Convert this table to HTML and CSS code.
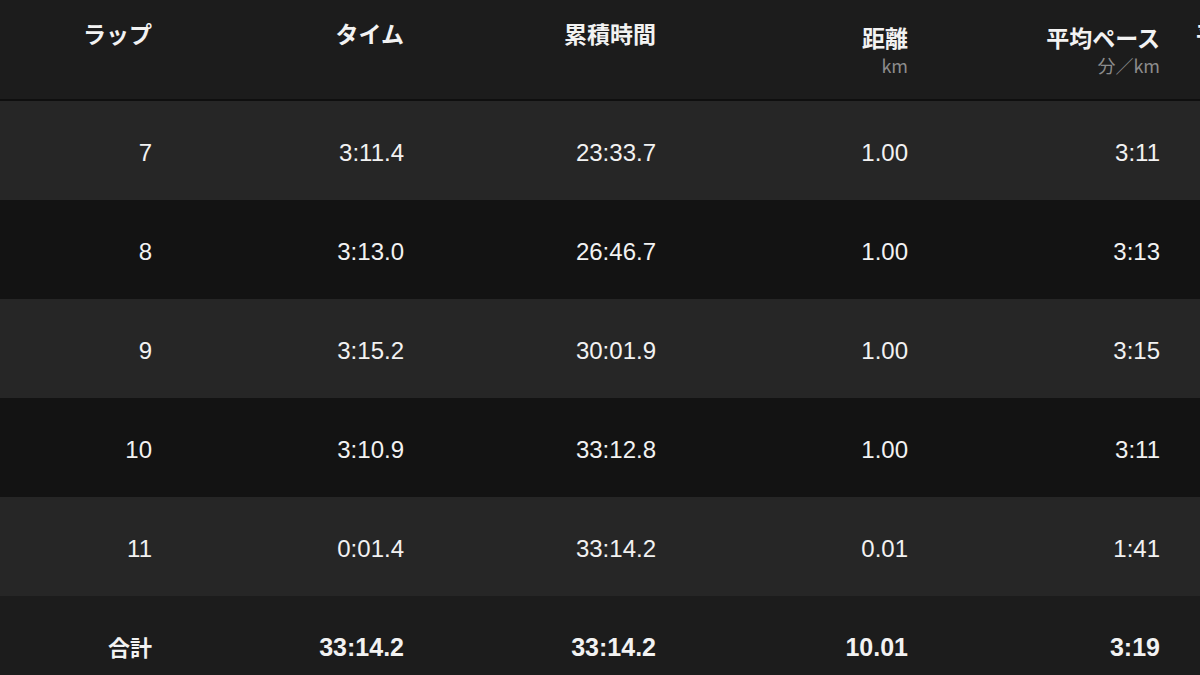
FILE: index.html
```html
<!DOCTYPE html>
<html lang="ja">
<head>
  <meta charset="UTF-8" />
  <title>ラップ</title>
  <link rel="stylesheet" href="styles.css">
</head>
<body>
  <div class="laps">
    <div class="row head">
      <div class="cell">ラップ</div>
      <div class="cell">タイム</div>
      <div class="cell">累積時間</div>
      <div class="cell unit">距離<span class="sub">km</span></div>
      <div class="cell unit">平均ペース<span class="sub">分／km</span></div>
      <div class="cell extra">平均心拍数</div>
    </div>

    <div class="row light">
      <div class="cell">7</div>
      <div class="cell">3:11.4</div>
      <div class="cell">23:33.7</div>
      <div class="cell">1.00</div>
      <div class="cell">3:11</div>
      <div class="cell extra"></div>
    </div>
    <div class="row dark">
      <div class="cell">8</div>
      <div class="cell">3:13.0</div>
      <div class="cell">26:46.7</div>
      <div class="cell">1.00</div>
      <div class="cell">3:13</div>
      <div class="cell extra"></div>
    </div>
    <div class="row light">
      <div class="cell">9</div>
      <div class="cell">3:15.2</div>
      <div class="cell">30:01.9</div>
      <div class="cell">1.00</div>
      <div class="cell">3:15</div>
      <div class="cell extra"></div>
    </div>
    <div class="row dark">
      <div class="cell">10</div>
      <div class="cell">3:10.9</div>
      <div class="cell">33:12.8</div>
      <div class="cell">1.00</div>
      <div class="cell">3:11</div>
      <div class="cell extra"></div>
    </div>
    <div class="row light">
      <div class="cell">11</div>
      <div class="cell">0:01.4</div>
      <div class="cell">33:14.2</div>
      <div class="cell">0.01</div>
      <div class="cell">1:41</div>
      <div class="cell extra"></div>
    </div>

    <div class="row total">
      <div class="cell jp">合計</div>
      <div class="cell">33:14.2</div>
      <div class="cell">33:14.2</div>
      <div class="cell">10.01</div>
      <div class="cell">3:19</div>
      <div class="cell extra"></div>
    </div>
  </div>
</body>
</html>
```

FILE: styles.css
```css
html, body { margin: 0; background: #1c1c1c; overflow: hidden; }
body { width: 1200px; height: 675px; font-family: "Liberation Sans", "Noto Sans CJK JP", sans-serif; color: #f2f2f2; }

.laps { width: 1400px; }
.row { display: grid; grid-template-columns: 152px repeat(4, 252px) 240px; height: 99px; align-items: center; }
.cell { text-align: right; font-size: 24px; white-space: nowrap; padding-top: 4px; }
.cell.extra { text-align: left; padding-left: 36px; }

.head { height: 99px; align-items: start; border-bottom: 2px solid #0f0f0f; background: #1c1c1c; }
.head .cell { font-family: "Noto Sans CJK JP", sans-serif; font-weight: bold; font-size: 23px; line-height: 34px; padding-top: 16px; }
.head .cell.unit { padding-top: 20px; }
.head .sub { display: block; font-weight: normal; font-size: 18px; line-height: 26px; color: #8c8c8c; font-family: "Noto Sans CJK JP", "Liberation Sans", sans-serif; margin-top: -2px; }

.light { background: #262626; }
.dark { background: #131313; }

.total { background: #1c1c1c; }
.total .cell { font-weight: bold; font-size: 25px; }
.total .jp { font-family: "Noto Sans CJK JP", sans-serif; font-size: 22px; padding-top: 0; }
```
